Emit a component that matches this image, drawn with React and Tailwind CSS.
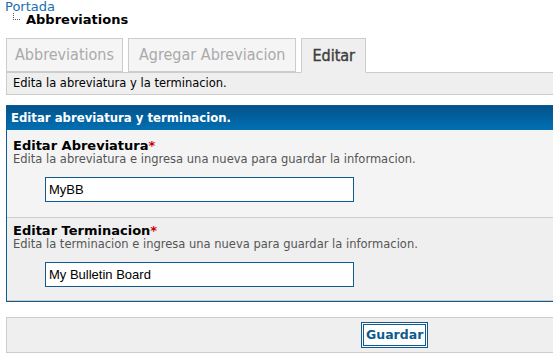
const VERDANA = "font-['DejaVu_Sans',Verdana,sans-serif]";
const TAHOMA = "font-['DejaVu_Sans_Condensed',Tahoma,sans-serif]";

const TABS = [
  { id: "list", label: "Abbreviations", pad: "px-[8px]" },
  { id: "add", label: "Agregar Abreviacion", pad: "px-[10px]" },
  { id: "edit", label: "Editar", pad: "px-[10px]" },
];

function Tab({ label, active, pad }) {
  return (
    <div
      className={`${TAHOMA} ${pad} flex items-center text-[16px] border border-[#cccccc] ${
        active
          ? "bg-[#efefef] text-[#3d3d3d] border-b-[#efefef] relative z-10 h-[35px] -mb-px [-webkit-text-stroke:0.4px_#3d3d3d]"
          : "bg-[#f5f5f5] text-[#aaaaaa] h-[34px]"
      }`}
    >
      {label}
    </div>
  );
}

function Field({ label, desc, value, bg, top }) {
  return (
    <div className={`${bg} px-[6px] ${top}`}>
      <div className="text-[13px] font-bold text-black leading-[15px]">
        {label}
        <span className="text-[#cc0000]">*</span>
      </div>
      <div className="text-[11.5px] text-[#555555] leading-[13px]">{desc}</div>
      <div className="pl-[32px] pt-[11px]">
        <input
          readOnly
          value={value}
          className="w-[309px] h-[25px] border border-[#0f5a8e] bg-white px-[3px] text-[13px] text-black font-['Liberation_Sans',Arial,sans-serif] outline-none"
        />
      </div>
    </div>
  );
}

export default function App() {
  return (
    <div className={`${VERDANA} w-[553px] h-[363px] overflow-hidden bg-white`}>
      {/* Breadcrumb */}
      <div className="pl-[5px] text-[13px] leading-[13px]">
        <div className="text-[#1a6eb4]">Portada</div>
        <div className="flex items-end pl-[7px]">
          <svg width="14" height="10" viewBox="0 0 14 10" className="mb-[3px]">
            <g fill="#555">
              <rect x="1" y="0" width="1" height="1" />
              <rect x="1" y="2" width="1" height="1" />
              <rect x="1" y="4" width="1" height="1" />
              <rect x="1" y="6" width="1" height="1" />
              <rect x="3" y="6" width="1" height="1" />
              <rect x="5" y="6" width="1" height="1" />
              <rect x="7" y="6" width="1" height="1" />
            </g>
          </svg>
          <span className="font-bold text-black">Abbreviations</span>
        </div>
      </div>

      {/* Tabs */}
      <div className="mt-[12px] ml-[6px] flex items-end gap-[5px]">
        {TABS.map((t) => (
          <Tab key={t.id} label={t.label} pad={t.pad} active={t.id === "edit"} />
        ))}
      </div>
      <div className="ml-[6px] w-[780px] h-[23px] bg-[#efefef] border border-[#cccccc] px-[6px] flex items-center text-[11.5px] text-black">
        Edita la abreviatura y la terminacion.
      </div>

      {/* Form */}
      <div className="mt-[10px] ml-[6px] w-[780px] border border-[#0f5a8e]">
        <div
          className={`${TAHOMA} h-[24px] px-[4px] flex items-center text-[13px] font-bold text-white bg-gradient-to-b from-[#02538a] to-[#0270b4]`}
        >
          Editar abreviatura y terminacion.
        </div>
        <Field
          label="Editar Abreviatura"
          desc="Edita la abreviatura e ingresa una nueva para guardar la informacion."
          value="MyBB"
          bg="bg-[#f4f4f4] border-b border-[#cccccc]"
          top="pt-[8px] pb-[15px]"
        />
        <Field
          label="Editar Terminacion"
          desc="Edita la terminacion e ingresa una nueva para guardar la informacion."
          value="My Bulletin Board"
          bg="bg-[#efefef] border-b border-[#cccccc]"
          top="pt-[5px] pb-[13px]"
        />
      </div>

      {/* Submit */}
      <div className="mt-[15px] ml-[6px] w-[780px] h-[36px] bg-[#efefef] border border-[#cccccc] flex items-center pl-[354px]">
        <button className="h-[26px] px-[2px] border-[3px] border-double border-[#0f5a8e] bg-white text-[12.5px] font-bold text-[#0f5a8e]">
          Guardar
        </button>
      </div>
    </div>
  );
}
